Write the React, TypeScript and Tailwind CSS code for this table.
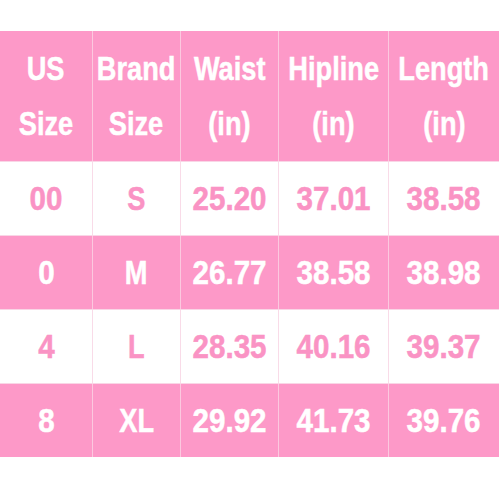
import React from "react";

const header = [
  ["US", "Size"],
  ["Brand", "Size"],
  ["Waist", "(in)"],
  ["Hipline", "(in)"],
  ["Length", "(in)"],
];

const rows = [
  ["00", "S", "25.20", "37.01", "38.58"],
  ["0", "M", "26.77", "38.58", "38.98"],
  ["4", "L", "28.35", "40.16", "39.37"],
  ["8", "XL", "29.92", "41.73", "39.76"],
];

const cols = "grid grid-cols-[92px_88px_98px_110px_111px]";

// narrow bold face is not installed, so squeeze Liberation Sans horizontally
const Narrow = ({ children, wide }: { children: React.ReactNode; wide?: boolean }) => (
  <span
    className={`inline-block whitespace-nowrap [-webkit-text-stroke:0.5px_currentColor] ${wide ? "scale-x-[0.87]" : "scale-x-[0.8]"}`}
  >
    {children}
  </span>
);

export default function App() {
  return (
    <div className="w-[500px] h-[500px] bg-white pt-[31px] font-['Liberation_Sans',Arial,sans-serif] font-bold text-[34px]">
      <div className="w-[499px]">
        <div className={`${cols} h-[130px] bg-[#fd99c8]`}>
          {header.map((h, i) => (
            <div
              key={i}
              className={`flex flex-col items-center justify-center leading-[55px] text-white ${i > 0 ? "border-l border-[#fcc8df]" : ""}`}
            >
              <Narrow>{h[0]}</Narrow>
              <Narrow>{h[1]}</Narrow>
            </div>
          ))}
        </div>
        {rows.map((r, ri) => {
          const pink = ri % 2 === 1;
          return (
            <div
              key={ri}
              className={`${cols} h-[74px] border-t border-[#f9d6e6] ${pink ? "bg-[#fd99c8] text-white" : "bg-white text-[#fa93c4]"}`}
            >
              {r.map((c, ci) => (
                <div
                  key={ci}
                  className={`flex items-center justify-center ${ci > 0 ? (pink ? "border-l border-[#fcc8df]" : "border-l border-[#f9dbe8]") : ""}`}
                >
                  <Narrow wide={ci !== 1}>{c}</Narrow>
                </div>
              ))}
            </div>
          );
        })}
      </div>
    </div>
  );
}
